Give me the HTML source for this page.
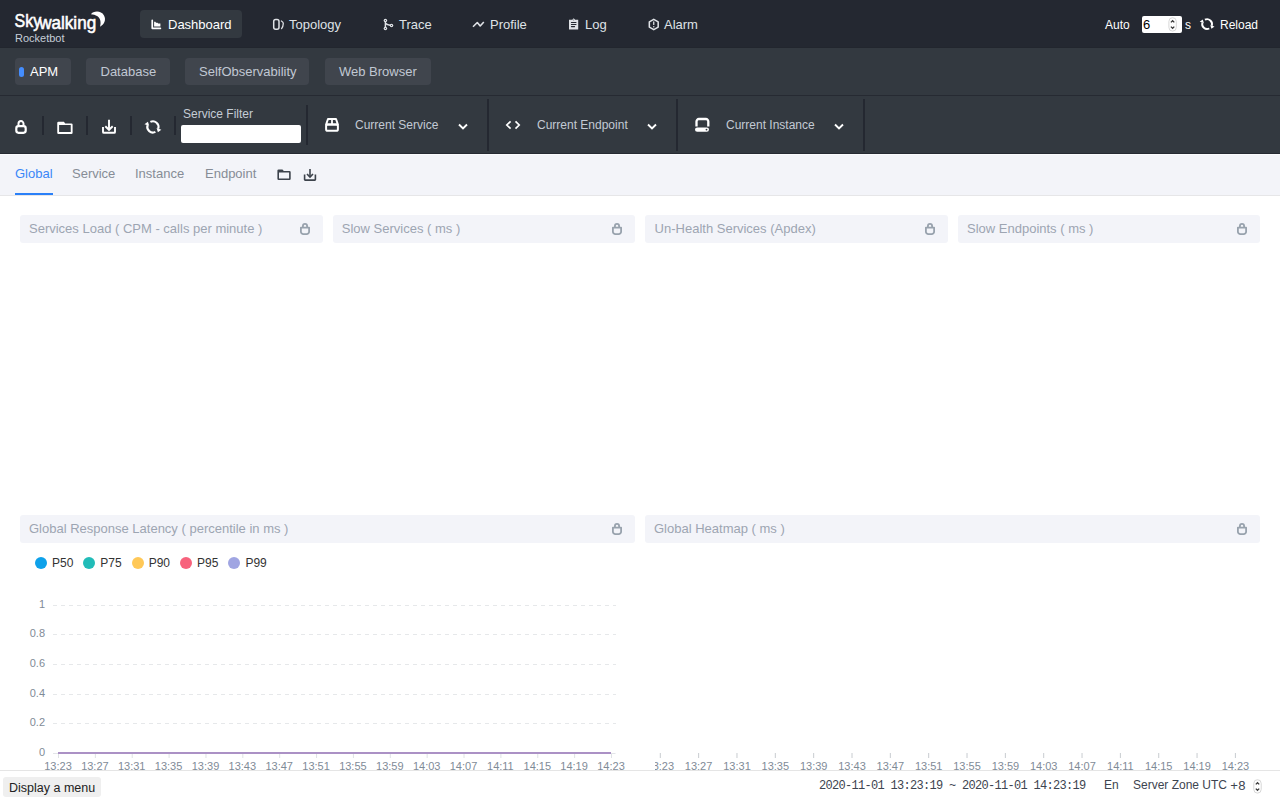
<!DOCTYPE html>
<html><head><meta charset="utf-8">
<style>
*{margin:0;padding:0;box-sizing:border-box}
html,body{width:1280px;height:800px;overflow:hidden;background:#fff;font-family:"Liberation Sans",sans-serif;position:relative}
.a{position:absolute;white-space:nowrap;line-height:1}
svg.a{overflow:visible}
.ax{font-size:11px;color:#7f8b97;text-align:right}
.xl{font-size:11px;color:#7f8b97}
</style></head><body>
<div class="a" style="left:0px;top:0px;width:1280px;height:47px;background:#242831;"></div>
<div class="a" style="left:0px;top:47px;width:1280px;height:1px;background:#22262e;"></div>
<div class="a" style="left:0px;top:48px;width:1280px;height:47px;background:#333940;"></div>
<div class="a" style="left:0px;top:95px;width:1280px;height:1px;background:#262a32;"></div>
<div class="a" style="left:0px;top:96px;width:1280px;height:57px;background:#333940;"></div>
<div class="a" style="left:0px;top:153px;width:1280px;height:1px;background:#262a32;"></div>
<div class="a" style="left:0px;top:154px;width:1280px;height:1px;background:#fafbfd;"></div>
<div class="a" style="left:0px;top:155px;width:1280px;height:40px;background:#f3f4f9;"></div>
<div class="a" style="left:0px;top:195px;width:1280px;height:1px;background:#e6e6e8;"></div>
<svg class="a" style="left:0px;top:0px;" width="110" height="40" viewBox="0 0 110 40"><text x="14.6" y="27.1" font-family="Liberation Sans" font-size="17.5" fill="#fff" stroke="#fff" stroke-width="0.55" textLength="26.6" lengthAdjust="spacingAndGlyphs">Sky</text><text x="39.2" y="29.3" font-family="Liberation Sans" font-size="17.5" fill="#fff" stroke="#fff" stroke-width="0.55" textLength="57" lengthAdjust="spacingAndGlyphs">walking</text><path d="M91,14.3 C93,11 101,10 104,15.5 C106.5,20 104,24.5 100,26.7 C101.5,22 100,18 97.5,16.3 C95.5,15 93,14.5 91,14.3 Z" fill="#fff"/></svg>
<div class="a" style="left:15px;top:33px;font-size:11px;color:#c6cdd8;font-family:'Liberation Sans',sans-serif;">Rocketbot</div>
<div class="a" style="left:140px;top:10px;width:102px;height:28px;background:#333940;border-radius:4px"></div>
<svg class="a" style="left:145px;top:12px;" width="20" height="20" viewBox="0 0 20 20"><path d="M6.4,8.3 Q6.4,7.5 7.25,7.5 Q8.1,7.5 8.1,8.3 V15.5 H15.4 Q16.25,15.5 16.25,16.35 Q16.25,17.2 15.4,17.2 H7.4 Q6.4,17.2 6.4,16.2 Z" fill="#fff"/><path d="M9.1,9.8 H10.4 L11,10.7 H12.6 L13.1,11.4 H15.4 V14.6 H9.1 Z" fill="#fff"/></svg>
<div class="a" style="left:168px;top:18px;font-size:13px;color:#ffffff;font-family:'Liberation Sans',sans-serif;">Dashboard</div>
<svg class="a" style="left:268px;top:14px;" width="20" height="20" viewBox="0 0 20 20"><rect x="5.7" y="5.5" width="5.3" height="9.7" rx="2" stroke="#dfe2e6" stroke-width="1.5" fill="none"/><path d="M13.4,7 C14.6,7.6 15.4,8.3 15.3,9.5 C15.2,11.5 14.5,13.5 13.6,14.6" stroke="#dfe2e6" stroke-width="1.3" fill="none" stroke-linecap="round"/></svg>
<div class="a" style="left:289px;top:18px;font-size:13px;color:#dfe2e6;font-family:'Liberation Sans',sans-serif;">Topology</div>
<svg class="a" style="left:380px;top:14px;" width="20" height="20" viewBox="0 0 20 20"><path d="M5.4,6.5 V14.5 M5.4,9.3 Q6.8,10.9 11.5,11.5" stroke="#dfe2e6" stroke-width="1.5" fill="none"/><circle cx="5.4" cy="6.5" r="1.75" fill="#dfe2e6"/><circle cx="5.4" cy="14.5" r="1.75" fill="#dfe2e6"/><circle cx="11.5" cy="11.5" r="1.75" fill="#dfe2e6"/><circle cx="5.4" cy="6.5" r="0.55" fill="#242831"/><circle cx="5.4" cy="14.5" r="0.55" fill="#242831"/><circle cx="11.5" cy="11.5" r="0.55" fill="#242831"/></svg>
<div class="a" style="left:399px;top:18px;font-size:13px;color:#dfe2e6;font-family:'Liberation Sans',sans-serif;">Trace</div>
<svg class="a" style="left:471px;top:18px;" width="15" height="12" viewBox="0 0 15 12"><path d="M2,8.8 L6.3,4.5 L9.2,8 L12.8,4" stroke="#dfe2e6" stroke-width="1.6" fill="none" stroke-linejoin="round"/></svg>
<div class="a" style="left:490px;top:18px;font-size:13px;color:#dfe2e6;font-family:'Liberation Sans',sans-serif;">Profile</div>
<svg class="a" style="left:564px;top:14px;" width="20" height="20" viewBox="0 0 20 20"><path d="M5,5.8 H8.3 L9.7,4.3 L11.1,5.8 H14.2 V15.2 Q14.2,15.6 13.8,15.6 H5.4 Q5,15.6 5,15.2 Z" fill="#dfe2e6"/><circle cx="9.7" cy="6" r="0.45" fill="#242831"/><path d="M7.4,8.4 H12 M7.4,10.5 H12 M7.4,12.6 H10.6" stroke="#242831" stroke-width="1.05" stroke-linecap="round"/></svg>
<div class="a" style="left:585px;top:18px;font-size:13px;color:#dfe2e6;font-family:'Liberation Sans',sans-serif;">Log</div>
<svg class="a" style="left:644px;top:14px;" width="20" height="20" viewBox="0 0 20 20"><path d="M9.75,5.40 L14.17,7.95 L14.17,13.05 L9.75,15.60 L5.33,13.05 L5.33,7.95 Z" stroke="#dfe2e6" stroke-width="1.55" fill="none" stroke-linejoin="round"/><path d="M9.75,8 V10.4" stroke="#dfe2e6" stroke-width="1.3" stroke-linecap="round"/><circle cx="9.75" cy="12.7" r="0.75" fill="#dfe2e6"/></svg>
<div class="a" style="left:664px;top:18px;font-size:13px;color:#dfe2e6;font-family:'Liberation Sans',sans-serif;">Alarm</div>
<div class="a" style="left:1105px;top:19px;font-size:12px;color:#ffffff;font-family:'Liberation Sans',sans-serif;">Auto</div>
<div class="a" style="left:1142px;top:16px;width:40px;height:17px;background:#ffffff;border-radius:2px"></div>
<div class="a" style="left:1143px;top:18px;font-size:13px;color:#000;font-family:'Liberation Sans',sans-serif;">6</div>
<svg class="a" style="left:1167px;top:17px;" width="11" height="15" viewBox="0 0 11 15"><rect x="1.9" y="0.7" width="7.4" height="13.4" rx="3.7" fill="#fff" stroke="#d2d2d2" stroke-width="0.9"/><path d="M3.9,5.4 L5.6,3.7 L7.3,5.4 M3.9,9.6 L5.6,11.3 L7.3,9.6" stroke="#3a3a3a" stroke-width="1.3" fill="none"/></svg>
<div class="a" style="left:1185px;top:19px;font-size:12px;color:#ffffff;font-family:'Liberation Sans',sans-serif;">s</div>
<svg class="a" style="left:1196px;top:14px;" width="22" height="20" viewBox="0 0 22 20"><path d="M8.91,5.72 A4.9,4.9 0 0 1 15.73,11.70" stroke="#fff" stroke-width="1.9" fill="none"/><path d="M14.30,11.14 L18.53,12.51 L15.47,14.72 Z" fill="#fff"/><path d="M13.29,14.48 A4.9,4.9 0 0 1 6.47,8.50" stroke="#fff" stroke-width="1.9" fill="none"/><path d="M7.90,9.06 L3.67,7.69 L6.73,5.48 Z" fill="#fff"/></svg>
<div class="a" style="left:1220px;top:19px;font-size:12px;color:#ffffff;font-family:'Liberation Sans',sans-serif;">Reload</div>
<div class="a" style="left:15px;top:58px;width:56px;height:27px;background:#40454d;border-radius:4px"></div>
<div class="a" style="left:19px;top:67px;width:5px;height:10px;background:#448dfe;border-radius:3px"></div>
<div class="a" style="left:30px;top:65px;font-size:13px;color:#ffffff;font-family:'Liberation Sans',sans-serif;">APM</div>
<div class="a" style="left:86px;top:58px;width:84px;height:27px;background:#40454d;border-radius:4px"></div>
<div class="a" style="left:100.5px;top:65px;font-size:13px;color:#c0c8d3;font-family:'Liberation Sans',sans-serif;">Database</div>
<div class="a" style="left:185px;top:58px;width:124px;height:27px;background:#40454d;border-radius:4px"></div>
<div class="a" style="left:199px;top:65px;font-size:13px;color:#c0c8d3;font-family:'Liberation Sans',sans-serif;">SelfObservability</div>
<div class="a" style="left:325px;top:58px;width:106px;height:27px;background:#40454d;border-radius:4px"></div>
<div class="a" style="left:339px;top:65px;font-size:13px;color:#c0c8d3;font-family:'Liberation Sans',sans-serif;">Web Browser</div>
<svg class="a" style="left:13px;top:119px;" width="16" height="16" viewBox="0 0 16 16"><path d="M5.5,7 V4.6 A2.5,2.5 0 0 1 10.5,4.6 V7" stroke="#fff" stroke-width="2" fill="none"/><rect x="3.3" y="7.2" width="9.4" height="6.6" rx="2.2" stroke="#fff" stroke-width="2.2" fill="none"/></svg>
<div class="a" style="left:42px;top:116px;width:2px;height:19px;background:#242831;"></div>
<svg class="a" style="left:0;top:0" width="1280" height="800"><path d="M57.25,122.95 Q57.25,121.75 58.45,121.75 H63.9 L65.2,123.4 H71.39999999999999 Q72.6,123.4 72.6,124.60000000000001 V132.8 Q72.6,134 71.39999999999999,134 H58.45 Q57.25,134 57.25,132.8 Z M59.1,125.1 H70.75 V132 H59.1 Z" fill="#fff" fill-rule="evenodd"/></svg>
<div class="a" style="left:86px;top:116px;width:2px;height:19px;background:#242831;"></div>
<svg class="a" style="left:100px;top:118px;" width="18" height="17" viewBox="0 0 18 17"><path d="M9,1.8 V10.8" stroke="#fff" stroke-width="1.9"/><path d="M5.3,8.2 L9,11.8 L12.7,8.2" stroke="#fff" stroke-width="1.9" fill="none"/><path d="M3,9 V13.9 A0.9,0.9 0 0 0 3.9,14.8 H14.1 A0.9,0.9 0 0 0 15,13.9 V9" stroke="#fff" stroke-width="1.9" fill="none"/></svg>
<div class="a" style="left:130px;top:116px;width:2px;height:19px;background:#242831;"></div>
<svg class="a" style="left:141px;top:116px;" width="24" height="22" viewBox="0 0 24 22"><path d="M9.39,5.89 A5.6,5.6 0 0 1 17.19,12.72" stroke="#fff" stroke-width="2.1" fill="none"/><path d="M15.59,12.10 L20.35,13.65 L16.90,16.17 Z" fill="#fff"/><path d="M14.41,15.91 A5.6,5.6 0 0 1 6.61,9.08" stroke="#fff" stroke-width="2.1" fill="none"/><path d="M8.21,9.70 L3.45,8.15 L6.90,5.63 Z" fill="#fff"/></svg>
<div class="a" style="left:174px;top:116px;width:2px;height:19px;background:#242831;"></div>
<div class="a" style="left:183px;top:108px;font-size:12px;color:#c5ccd5;font-family:'Liberation Sans',sans-serif;">Service Filter</div>
<div class="a" style="left:181px;top:125px;width:120px;height:18px;background:#ffffff;border-radius:2px"></div>
<div class="a" style="left:306px;top:105px;width:2px;height:40px;background:#242831;"></div>
<svg class="a" style="left:323px;top:116px;" width="18" height="18" viewBox="0 0 18 18"><path d="M5,3 H13 L14.9,8.5 H3.1 Z" stroke="#fff" stroke-width="2" fill="none" stroke-linejoin="round"/><rect x="3.1" y="8.5" width="11.8" height="6.25" rx="1.6" stroke="#fff" stroke-width="2" fill="none"/><path d="M9,3 V8" stroke="#fff" stroke-width="1.8"/></svg>
<div class="a" style="left:355px;top:119px;font-size:12px;color:#c3cad4;font-family:'Liberation Sans',sans-serif;">Current Service</div>
<svg class="a" style="left:456px;top:120px;" width="14" height="12" viewBox="0 0 14 12"><path d="M3,4.5 L7,8.5 L11,4.5" stroke="#fff" stroke-width="1.9" fill="none"/></svg>
<div class="a" style="left:487px;top:99px;width:2px;height:52px;background:#242831;"></div>
<svg class="a" style="left:503px;top:118px;" width="20" height="14" viewBox="0 0 20 14"><path d="M7.6,3.3 L3.8,7 L7.6,10.7 M12.5,3.3 L16.2,7 L12.5,10.7" stroke="#fff" stroke-width="1.7" fill="none"/></svg>
<div class="a" style="left:537px;top:119px;font-size:12px;color:#c3cad4;font-family:'Liberation Sans',sans-serif;">Current Endpoint</div>
<svg class="a" style="left:645px;top:120px;" width="14" height="12" viewBox="0 0 14 12"><path d="M3,4.5 L7,8.5 L11,4.5" stroke="#fff" stroke-width="1.9" fill="none"/></svg>
<div class="a" style="left:676px;top:99px;width:2px;height:52px;background:#242831;"></div>
<svg class="a" style="left:693px;top:116px;" width="18" height="18" viewBox="0 0 18 18"><path d="M3.5,10.5 V5.4 A2.4,2.4 0 0 1 5.9,3 H12.9 A2.4,2.4 0 0 1 15.3,5.4 V10.5" stroke="#fff" stroke-width="2.3" fill="none"/><rect x="2" y="11.4" width="14" height="4.4" rx="2.2" fill="#fff"/><circle cx="13.5" cy="13.6" r="0.9" fill="#333840"/></svg>
<div class="a" style="left:726px;top:119px;font-size:12px;color:#c3cad4;font-family:'Liberation Sans',sans-serif;">Current Instance</div>
<svg class="a" style="left:832px;top:120px;" width="14" height="12" viewBox="0 0 14 12"><path d="M3,4.5 L7,8.5 L11,4.5" stroke="#fff" stroke-width="1.9" fill="none"/></svg>
<div class="a" style="left:863px;top:99px;width:2px;height:52px;background:#242831;"></div>
<div class="a" style="left:15px;top:167px;font-size:13px;color:#3a87f8;font-family:'Liberation Sans',sans-serif;">Global</div>
<div class="a" style="left:15px;top:193px;width:38px;height:2px;background:#2a80f8;"></div>
<div class="a" style="left:72px;top:167px;font-size:13px;color:#868c96;font-family:'Liberation Sans',sans-serif;">Service</div>
<div class="a" style="left:135px;top:167px;font-size:13px;color:#868c96;font-family:'Liberation Sans',sans-serif;">Instance</div>
<div class="a" style="left:205px;top:167px;font-size:13px;color:#868c96;font-family:'Liberation Sans',sans-serif;">Endpoint</div>
<svg class="a" style="left:0;top:0" width="1280" height="800"><path d="M277.4,170.6 Q277.4,169.4 278.59999999999997,169.4 H282.5 L283.8,171 H289.5 Q290.7,171 290.7,172.2 V178.8 Q290.7,180 289.5,180 H278.59999999999997 Q277.4,180 277.4,178.8 Z M279,172.4 H289.1 V178.6 H279 Z" fill="#3d434c" fill-rule="evenodd"/></svg>
<svg class="a" style="left:302px;top:168px;" width="16" height="14" viewBox="0 0 16 14"><path d="M8,1 V8.5" stroke="#3d434c" stroke-width="1.6"/><path d="M5,6 L8,9 L11,6" stroke="#3d434c" stroke-width="1.6" fill="none"/><path d="M2.6,6.5 V11.5 A0.6,0.6 0 0 0 3.2,12.1 H12.8 A0.6,0.6 0 0 0 13.4,11.5 V6.5" stroke="#3d434c" stroke-width="1.6" fill="none"/></svg>
<div class="a" style="left:20px;top:215px;width:303px;height:28px;background:#f3f4f9;border-radius:3px"></div>
<div class="a" style="left:29px;top:222px;font-size:13px;color:#9da5b2;font-family:'Liberation Sans',sans-serif;">Services Load ( CPM - calls per minute )</div>
<svg class="a" style="left:299px;top:222px;" width="12" height="14" viewBox="0 0 12 14"><path d="M3.9,5.2 V3.9 A2.1,2.1 0 0 1 8.1,3.9 V5.2" stroke="#98a2ad" stroke-width="1.8" fill="none"/><path d="M1.9,5.6 H10.1 V9.7 A2.5,2.5 0 0 1 7.6,12.2 H4.4 A2.5,2.5 0 0 1 1.9,9.7 Z" stroke="#98a2ad" stroke-width="1.8" fill="none" stroke-linejoin="round"/></svg>
<div class="a" style="left:333px;top:215px;width:302px;height:28px;background:#f3f4f9;border-radius:3px"></div>
<div class="a" style="left:341.8px;top:222px;font-size:13px;color:#9da5b2;font-family:'Liberation Sans',sans-serif;">Slow Services ( ms )</div>
<svg class="a" style="left:611px;top:222px;" width="12" height="14" viewBox="0 0 12 14"><path d="M3.9,5.2 V3.9 A2.1,2.1 0 0 1 8.1,3.9 V5.2" stroke="#98a2ad" stroke-width="1.8" fill="none"/><path d="M1.9,5.6 H10.1 V9.7 A2.5,2.5 0 0 1 7.6,12.2 H4.4 A2.5,2.5 0 0 1 1.9,9.7 Z" stroke="#98a2ad" stroke-width="1.8" fill="none" stroke-linejoin="round"/></svg>
<div class="a" style="left:645px;top:215px;width:303px;height:28px;background:#f3f4f9;border-radius:3px"></div>
<div class="a" style="left:654.6px;top:222px;font-size:13px;color:#9da5b2;font-family:'Liberation Sans',sans-serif;">Un-Health Services (Apdex)</div>
<svg class="a" style="left:924px;top:222px;" width="12" height="14" viewBox="0 0 12 14"><path d="M3.9,5.2 V3.9 A2.1,2.1 0 0 1 8.1,3.9 V5.2" stroke="#98a2ad" stroke-width="1.8" fill="none"/><path d="M1.9,5.6 H10.1 V9.7 A2.5,2.5 0 0 1 7.6,12.2 H4.4 A2.5,2.5 0 0 1 1.9,9.7 Z" stroke="#98a2ad" stroke-width="1.8" fill="none" stroke-linejoin="round"/></svg>
<div class="a" style="left:958px;top:215px;width:302px;height:28px;background:#f3f4f9;border-radius:3px"></div>
<div class="a" style="left:967px;top:222px;font-size:13px;color:#9da5b2;font-family:'Liberation Sans',sans-serif;">Slow Endpoints ( ms )</div>
<svg class="a" style="left:1236px;top:222px;" width="12" height="14" viewBox="0 0 12 14"><path d="M3.9,5.2 V3.9 A2.1,2.1 0 0 1 8.1,3.9 V5.2" stroke="#98a2ad" stroke-width="1.8" fill="none"/><path d="M1.9,5.6 H10.1 V9.7 A2.5,2.5 0 0 1 7.6,12.2 H4.4 A2.5,2.5 0 0 1 1.9,9.7 Z" stroke="#98a2ad" stroke-width="1.8" fill="none" stroke-linejoin="round"/></svg>
<div class="a" style="left:20px;top:515px;width:615px;height:28px;background:#f3f4f9;border-radius:3px"></div>
<div class="a" style="left:29px;top:522px;font-size:13px;color:#9da5b2;font-family:'Liberation Sans',sans-serif;">Global Response Latency ( percentile in ms )</div>
<svg class="a" style="left:611px;top:522px;" width="12" height="14" viewBox="0 0 12 14"><path d="M3.9,5.2 V3.9 A2.1,2.1 0 0 1 8.1,3.9 V5.2" stroke="#98a2ad" stroke-width="1.8" fill="none"/><path d="M1.9,5.6 H10.1 V9.7 A2.5,2.5 0 0 1 7.6,12.2 H4.4 A2.5,2.5 0 0 1 1.9,9.7 Z" stroke="#98a2ad" stroke-width="1.8" fill="none" stroke-linejoin="round"/></svg>
<div class="a" style="left:645px;top:515px;width:615px;height:28px;background:#f3f4f9;border-radius:3px"></div>
<div class="a" style="left:654px;top:522px;font-size:13px;color:#9da5b2;font-family:'Liberation Sans',sans-serif;">Global Heatmap ( ms )</div>
<svg class="a" style="left:1236px;top:522px;" width="12" height="14" viewBox="0 0 12 14"><path d="M3.9,5.2 V3.9 A2.1,2.1 0 0 1 8.1,3.9 V5.2" stroke="#98a2ad" stroke-width="1.8" fill="none"/><path d="M1.9,5.6 H10.1 V9.7 A2.5,2.5 0 0 1 7.6,12.2 H4.4 A2.5,2.5 0 0 1 1.9,9.7 Z" stroke="#98a2ad" stroke-width="1.8" fill="none" stroke-linejoin="round"/></svg>
<div class="a" style="left:35.0px;top:556.5px;width:12px;height:12px;background:#0ea1ea;border-radius:6px"></div>
<div class="a" style="left:52.0px;top:557px;font-size:12px;color:#333333;font-family:'Liberation Sans',sans-serif;">P50</div>
<div class="a" style="left:83.35px;top:556.5px;width:12px;height:12px;background:#21bcb8;border-radius:6px"></div>
<div class="a" style="left:100.35px;top:557px;font-size:12px;color:#333333;font-family:'Liberation Sans',sans-serif;">P75</div>
<div class="a" style="left:131.7px;top:556.5px;width:12px;height:12px;background:#ffc857;border-radius:6px"></div>
<div class="a" style="left:148.7px;top:557px;font-size:12px;color:#333333;font-family:'Liberation Sans',sans-serif;">P90</div>
<div class="a" style="left:180.05px;top:556.5px;width:12px;height:12px;background:#f7627c;border-radius:6px"></div>
<div class="a" style="left:197.05px;top:557px;font-size:12px;color:#333333;font-family:'Liberation Sans',sans-serif;">P95</div>
<div class="a" style="left:228.4px;top:556.5px;width:12px;height:12px;background:#a0a5e2;border-radius:6px"></div>
<div class="a" style="left:245.4px;top:557px;font-size:12px;color:#333333;font-family:'Liberation Sans',sans-serif;">P99</div>
<svg class="a" style="left:0;top:0" width="1280" height="800"><path d="M53,605.5 H616" stroke="#e6e8ea" stroke-width="1" stroke-dasharray="4,4"/><path d="M53,634.5 H616" stroke="#e6e8ea" stroke-width="1" stroke-dasharray="4,4"/><path d="M53,664.5 H616" stroke="#e6e8ea" stroke-width="1" stroke-dasharray="4,4"/><path d="M53,694.5 H616" stroke="#e6e8ea" stroke-width="1" stroke-dasharray="4,4"/><path d="M53,723.5 H616" stroke="#e6e8ea" stroke-width="1" stroke-dasharray="4,4"/><path d="M53,753.5 H58 M611,753.5 H615.5" stroke="#e3e5e8" stroke-width="1"/><path d="M58.50,754 V758" stroke="#dfe2e5" stroke-width="1"/><path d="M95.37,754 V758" stroke="#dfe2e5" stroke-width="1"/><path d="M132.23,754 V758" stroke="#dfe2e5" stroke-width="1"/><path d="M169.10,754 V758" stroke="#dfe2e5" stroke-width="1"/><path d="M205.97,754 V758" stroke="#dfe2e5" stroke-width="1"/><path d="M242.83,754 V758" stroke="#dfe2e5" stroke-width="1"/><path d="M279.70,754 V758" stroke="#dfe2e5" stroke-width="1"/><path d="M316.57,754 V758" stroke="#dfe2e5" stroke-width="1"/><path d="M353.43,754 V758" stroke="#dfe2e5" stroke-width="1"/><path d="M390.30,754 V758" stroke="#dfe2e5" stroke-width="1"/><path d="M427.17,754 V758" stroke="#dfe2e5" stroke-width="1"/><path d="M464.03,754 V758" stroke="#dfe2e5" stroke-width="1"/><path d="M500.90,754 V758" stroke="#dfe2e5" stroke-width="1"/><path d="M537.77,754 V758" stroke="#dfe2e5" stroke-width="1"/><path d="M574.63,754 V758" stroke="#dfe2e5" stroke-width="1"/><path d="M611.50,754 V758" stroke="#dfe2e5" stroke-width="1"/><path d="M58,753 H611" stroke="#ab91c5" stroke-width="2"/></svg>
<div class="a ax" style="right:1235px;top:599px">1</div>
<div class="a ax" style="right:1235px;top:628px">0.8</div>
<div class="a ax" style="right:1235px;top:658px">0.6</div>
<div class="a ax" style="right:1235px;top:688px">0.4</div>
<div class="a ax" style="right:1235px;top:717px">0.2</div>
<div class="a ax" style="right:1235px;top:747px">0</div>
<div class="a xl" style="left:44.0px;width:28px;text-align:center;top:761px">13:23</div>
<div class="a xl" style="left:80.9px;width:28px;text-align:center;top:761px">13:27</div>
<div class="a xl" style="left:117.7px;width:28px;text-align:center;top:761px">13:31</div>
<div class="a xl" style="left:154.6px;width:28px;text-align:center;top:761px">13:35</div>
<div class="a xl" style="left:191.5px;width:28px;text-align:center;top:761px">13:39</div>
<div class="a xl" style="left:228.3px;width:28px;text-align:center;top:761px">13:43</div>
<div class="a xl" style="left:265.2px;width:28px;text-align:center;top:761px">13:47</div>
<div class="a xl" style="left:302.1px;width:28px;text-align:center;top:761px">13:51</div>
<div class="a xl" style="left:338.9px;width:28px;text-align:center;top:761px">13:55</div>
<div class="a xl" style="left:375.8px;width:28px;text-align:center;top:761px">13:59</div>
<div class="a xl" style="left:412.7px;width:28px;text-align:center;top:761px">14:03</div>
<div class="a xl" style="left:449.5px;width:28px;text-align:center;top:761px">14:07</div>
<div class="a xl" style="left:486.4px;width:28px;text-align:center;top:761px">14:11</div>
<div class="a xl" style="left:523.3px;width:28px;text-align:center;top:761px">14:15</div>
<div class="a xl" style="left:560.1px;width:28px;text-align:center;top:761px">14:19</div>
<div class="a xl" style="left:597.0px;width:28px;text-align:center;top:761px">14:23</div>
<svg class="a" style="left:0;top:0" width="1280" height="800"><path d="M660.30,753 V758" stroke="#c8ccd0" stroke-width="1"/><path d="M698.64,753 V758" stroke="#c8ccd0" stroke-width="1"/><path d="M736.98,753 V758" stroke="#c8ccd0" stroke-width="1"/><path d="M775.32,753 V758" stroke="#c8ccd0" stroke-width="1"/><path d="M813.66,753 V758" stroke="#c8ccd0" stroke-width="1"/><path d="M852.00,753 V758" stroke="#c8ccd0" stroke-width="1"/><path d="M890.34,753 V758" stroke="#c8ccd0" stroke-width="1"/><path d="M928.68,753 V758" stroke="#c8ccd0" stroke-width="1"/><path d="M967.02,753 V758" stroke="#c8ccd0" stroke-width="1"/><path d="M1005.36,753 V758" stroke="#c8ccd0" stroke-width="1"/><path d="M1043.70,753 V758" stroke="#c8ccd0" stroke-width="1"/><path d="M1082.04,753 V758" stroke="#c8ccd0" stroke-width="1"/><path d="M1120.38,753 V758" stroke="#c8ccd0" stroke-width="1"/><path d="M1158.72,753 V758" stroke="#c8ccd0" stroke-width="1"/><path d="M1197.06,753 V758" stroke="#c8ccd0" stroke-width="1"/><path d="M1235.40,753 V758" stroke="#c8ccd0" stroke-width="1"/></svg>
<div class="a" style="left:655px;top:740px;width:620px;height:40px;overflow:hidden">
<div class="a xl" style="left:-8.7px;width:28px;text-align:center;top:21px">13:23</div>
<div class="a xl" style="left:29.6px;width:28px;text-align:center;top:21px">13:27</div>
<div class="a xl" style="left:68.0px;width:28px;text-align:center;top:21px">13:31</div>
<div class="a xl" style="left:106.3px;width:28px;text-align:center;top:21px">13:35</div>
<div class="a xl" style="left:144.7px;width:28px;text-align:center;top:21px">13:39</div>
<div class="a xl" style="left:183.0px;width:28px;text-align:center;top:21px">13:43</div>
<div class="a xl" style="left:221.3px;width:28px;text-align:center;top:21px">13:47</div>
<div class="a xl" style="left:259.7px;width:28px;text-align:center;top:21px">13:51</div>
<div class="a xl" style="left:298.0px;width:28px;text-align:center;top:21px">13:55</div>
<div class="a xl" style="left:336.4px;width:28px;text-align:center;top:21px">13:59</div>
<div class="a xl" style="left:374.7px;width:28px;text-align:center;top:21px">14:03</div>
<div class="a xl" style="left:413.0px;width:28px;text-align:center;top:21px">14:07</div>
<div class="a xl" style="left:451.4px;width:28px;text-align:center;top:21px">14:11</div>
<div class="a xl" style="left:489.7px;width:28px;text-align:center;top:21px">14:15</div>
<div class="a xl" style="left:528.1px;width:28px;text-align:center;top:21px">14:19</div>
<div class="a xl" style="left:566.4px;width:28px;text-align:center;top:21px">14:23</div>
</div>
<div class="a" style="left:0px;top:770px;width:1280px;height:30px;background:#ffffff;border-top:1px solid #e5e5e5"></div>
<div class="a" style="left:3px;top:777px;width:98px;height:20px;background:#efefef;border-radius:3px"></div>
<div class="a" style="left:9px;top:782px;font-size:12.5px;color:#222222;font-family:'Liberation Sans',sans-serif;">Display a menu</div>
<div class="a" style="left:819px;top:780px;font-size:12px;color:#3d4450;font-family:'Liberation Mono',monospace;letter-spacing:-0.7px">2020-11-01 13:23:19 ~ 2020-11-01 14:23:19</div>
<div class="a" style="left:1104px;top:779px;font-size:12px;color:#3d4450;font-family:'Liberation Sans',sans-serif;">En</div>
<div class="a" style="left:1133px;top:779px;font-size:12px;color:#3d4450;font-family:'Liberation Sans',sans-serif;">Server Zone UTC</div>
<div class="a" style="left:1230.3px;top:780px;font-size:13px;color:#3d4450;font-family:'Liberation Mono',monospace;">+8</div>
<svg class="a" style="left:1252px;top:779px;" width="11" height="15" viewBox="0 0 11 15"><rect x="1.8" y="0.7" width="7.4" height="13.4" rx="3.7" fill="#fff" stroke="#d2d2d2" stroke-width="0.9"/><path d="M3.8,5.4 L5.5,3.7 L7.2,5.4 M3.8,9.6 L5.5,11.3 L7.2,9.6" stroke="#3a3a3a" stroke-width="1.3" fill="none"/></svg>
</body></html>
